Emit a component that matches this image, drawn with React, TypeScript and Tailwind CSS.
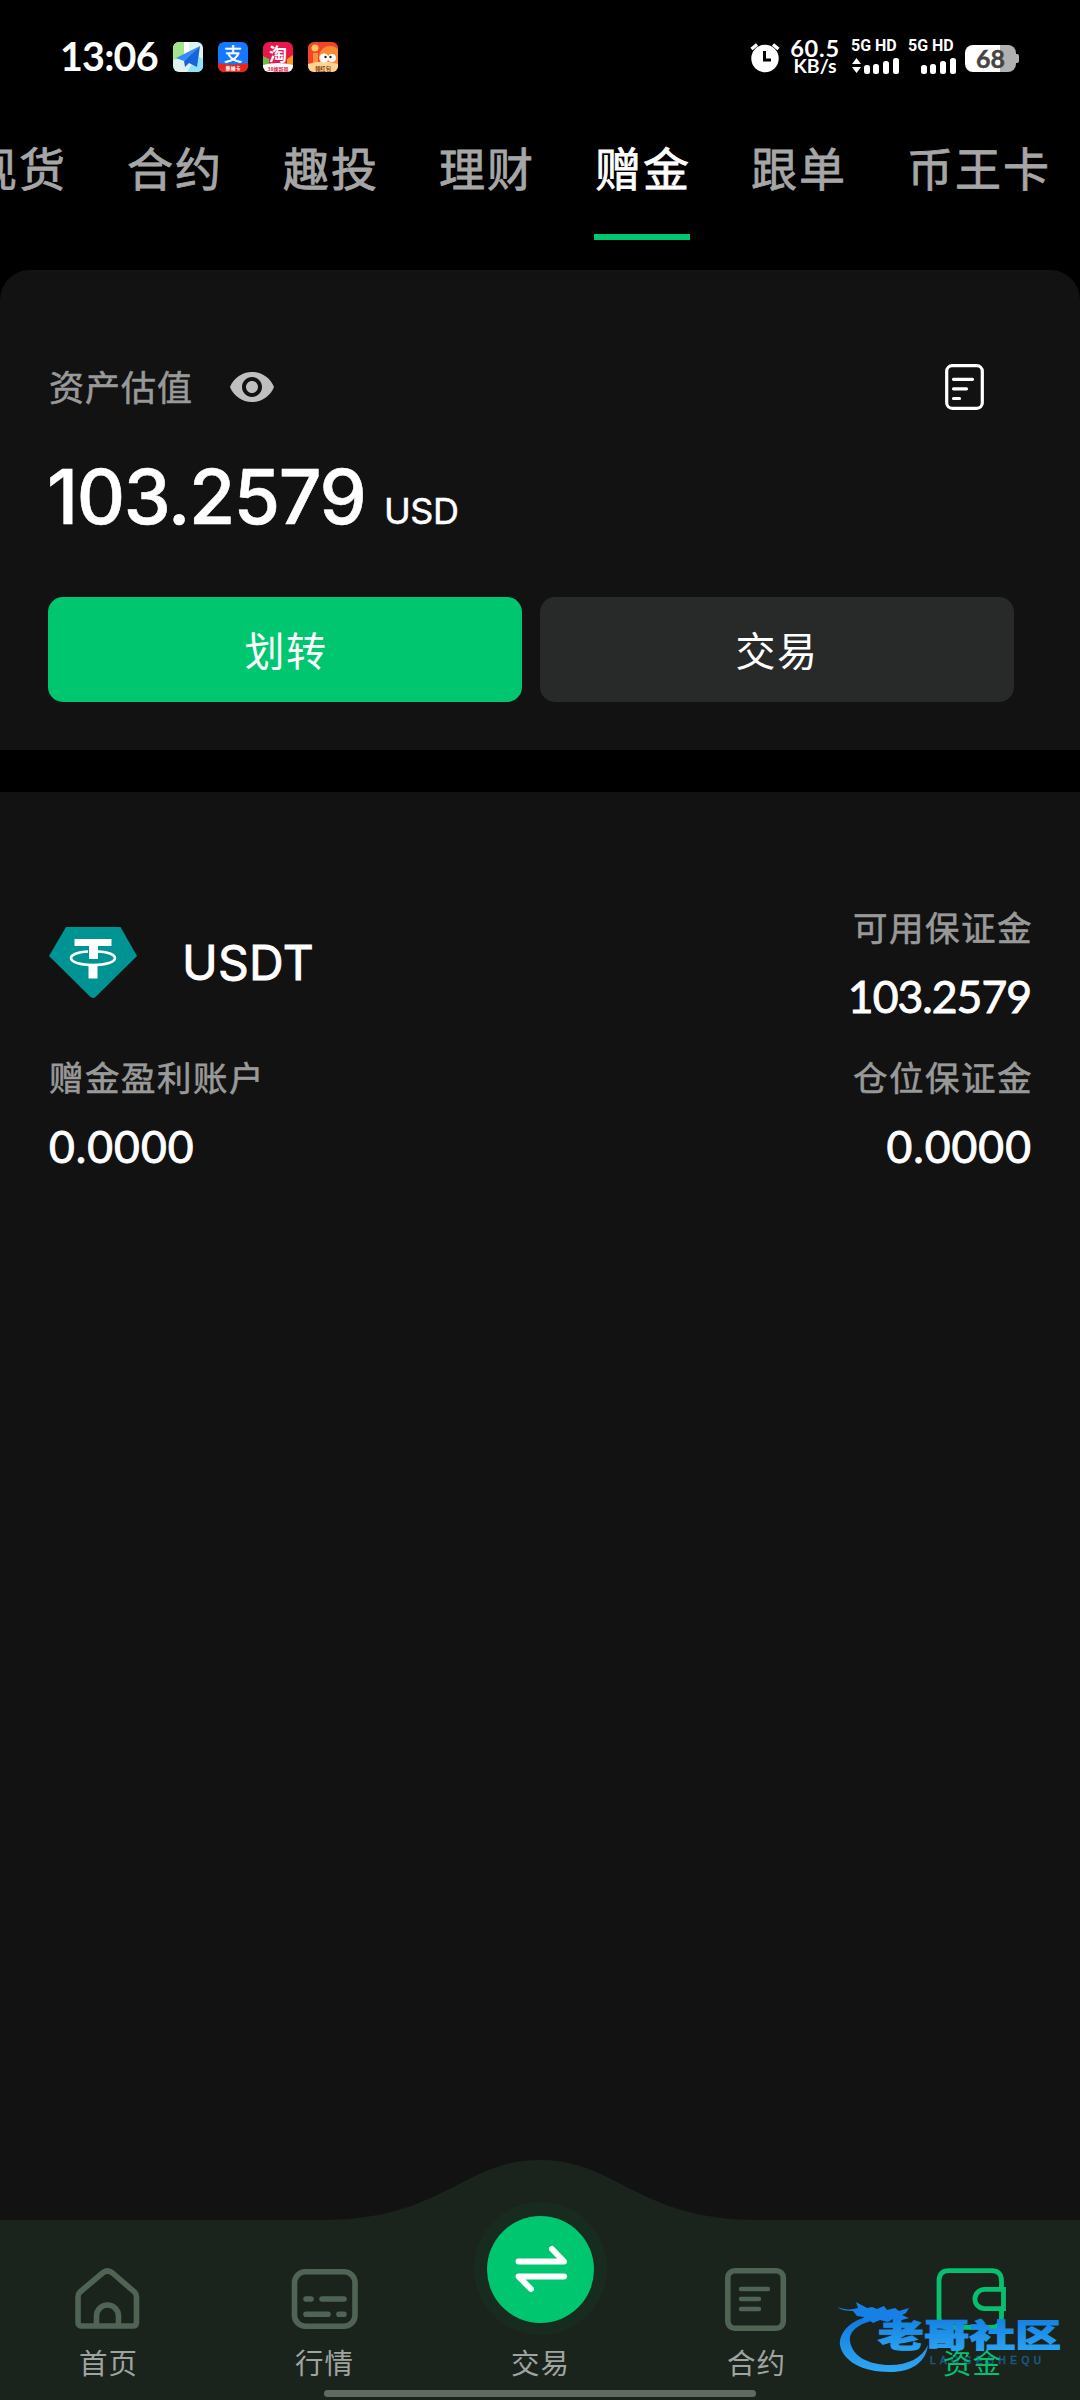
import type { ReactNode } from 'react';
import { MdVisibility } from 'react-icons/md';

const TABS = ['现货', '合约', '趣投', '理财', '赠金', '跟单', '币王卡'];
const ACTIVE_TAB = '赠金';

function AppBadge({ children }: { children: ReactNode }) {
  return (
    <svg className="w-[30px] h-[30px] rounded-[6px]" viewBox="0 0 30 30">
      {children}
    </svg>
  );
}

function Signal({ arrows }: { arrows?: boolean }) {
  return (
    <div className="flex flex-col items-end w-[48px]">
      <div className="w-full text-[16px] leading-[14px] font-bold whitespace-nowrap font-['Roboto','Liberation_Sans',sans-serif]">
        5G HD
      </div>
      <svg className="w-[48px] h-[17px] mt-[4px]" viewBox="0 0 48 17" fill="#fff">
        {arrows && <path d="M1 7 5.5 1 10 7ZM1 10h9l-4.5 6Z" />}
        <rect x="13" y="8" width="6" height="9" rx="2.5" />
        <rect x="22" y="7" width="6" height="10" rx="2.5" />
        <rect x="32" y="4" width="6" height="13" rx="2.5" />
        <rect x="42" y="1" width="6" height="16" rx="2.5" />
      </svg>
    </div>
  );
}

function StatusBar() {
  return (
    <header className="h-[114px] shrink-0 flex items-start justify-between pl-[60px] pr-[60px] text-white">
      <div className="flex items-center h-[30px] mt-[41px]">
        <span className="w-[113px] text-[39.5px] leading-[30px] font-bold tracking-[-0.8px] font-['Lato',sans-serif]">13:06</span>
        <div className="flex gap-[15px] mt-[2px]">
          <AppBadge>
            <rect width="30" height="30" fill="#dff3ee" />
            <path d="M0 0h11v15L0 18Z" fill="#a4e38c" />
            <path d="M11 0h5v12l-5 3Z" fill="#fff" />
            <path d="M14 30 24 14l6 3v13Z" fill="#8fe3ff" />
            <path d="M27 4 3 16l8 3Z" fill="#2f8df5" />
            <path d="M27 4 11 19l1 6 4-4 8 4Z" fill="#1763dc" />
          </AppBadge>
          <AppBadge>
            <rect width="30" height="30" fill="#1677ff" />
            <text x="15" y="19" textAnchor="middle" fontSize="18" fill="#fff" stroke="#fff" strokeWidth="0.5" fontFamily="Noto Sans CJK SC">支</text>
            <path d="M0 21q15 3 30 0v9H0Z" fill="#ee2416" />
            <text x="15" y="28" textAnchor="middle" fontSize="5" fontWeight="700" fill="#fff" fontFamily="Noto Sans CJK SC">集福卡</text>
          </AppBadge>
          <AppBadge>
            <rect width="30" height="30" fill="#e8164b" />
            <path d="M0 14 6 17v7H0Z" fill="#6bbf3c" />
            <path d="M30 13l-6 4v7h6Z" fill="#f79a1e" />
            <path d="M0 23q15-4 30 0v7H0Z" fill="#fff" />
            <text x="15" y="19" textAnchor="middle" fontSize="18" fontWeight="700" fill="#fff" fontFamily="Noto Sans CJK SC">淘</text>
            <text x="15" y="28.7" textAnchor="middle" fontSize="5" fontWeight="700" fill="#e8164b" fontFamily="Noto Sans CJK SC">38焕新周</text>
          </AppBadge>
          <AppBadge>
            <rect width="30" height="30" fill="#f2432c" />
            <circle cx="22" cy="15" r="11" fill="#f98b35" />
            <circle cx="7" cy="6" r="3.5" fill="#ffc65b" />
            <path d="M5 11h5v11H5Z" fill="#fb8f3a" />
            <path d="M0 22q15-5 30 0v8H0Z" fill="#ffd391" />
            <circle cx="16" cy="16" r="4.6" fill="#fff" />
            <circle cx="24" cy="16" r="4" fill="#fff" />
            <circle cx="17.5" cy="15" r="1.2" fill="#222" />
            <circle cx="22.5" cy="15" r="1.2" fill="#222" />
            <text x="15" y="28.6" textAnchor="middle" fontSize="5.4" fontWeight="700" fill="#7a3a10" fontFamily="Noto Sans CJK SC">领红包</text>
          </AppBadge>
        </div>
      </div>

      <div className="flex items-start mt-[39px]">
        <svg className="w-[30px] h-[34px]" viewBox="0 0 30 34">
          <circle cx="15" cy="19.5" r="13.7" fill="#fff" />
          <path d="M1.5 10 7 5.5M28.5 10 23 5.5" stroke="#fff" strokeWidth="3.4" />
          <path d="M14.5 12v9H21" stroke="#000" strokeWidth="3" fill="none" />
        </svg>
        <div className="w-[60px] ml-[5px] flex flex-col items-center font-bold font-['Lato',sans-serif]">
          <span className="text-[23.5px] leading-[18px] tracking-[0.8px]">60.5</span>
          <span className="text-[19.5px] leading-[18px]">KB/s</span>
        </div>
        <div className="flex gap-[9px] ml-[6px]">
          <Signal arrows />
          <Signal />
        </div>
        <svg className="w-[55px] h-[34px] ml-[9px]" viewBox="0 0 55 34">
          <clipPath id="cell"><rect y="6" width="51" height="27" rx="8" /></clipPath>
          <g clipPath="url(#cell)">
            <rect width="35" height="34" fill="#fff" />
            <rect x="35" width="20" height="34" fill="#b1b1b1" />
          </g>
          <path d="M51 15h1q2 0 2 2v5q0 2-2 2h-1Z" fill="#b1b1b1" />
          <text x="25.5" y="28.5" textAnchor="middle" fontSize="25" fontWeight="700" fill="#444" stroke="#444" strokeWidth="0.4" fontFamily="Lato">68</text>
        </svg>
      </div>
    </header>
  );
}

function DocIcon() {
  return (
    <svg className="w-[39px] h-[46px]" viewBox="0 0 39 46" fill="none" stroke="#fff" strokeWidth="3.2" strokeLinecap="round">
      <rect x="1.7" y="1.7" width="35.6" height="42.6" rx="5.5" />
      <path d="M8.5 15.3h19M8.5 24.8h13M8.5 34.5h6" />
    </svg>
  );
}

function TetherIcon() {
  return (
    <svg className="w-[88px] h-[72px]" viewBox="0 0 88 72">
      <path d="M17 0h54.5L88 29 46.5 70Q44 72 41.5 70L0 29Z" fill="#009393" />
      <path d="M25.5 12h37v7H49v13h-9v-13H25.5Z" fill="#fff" />
      <path d="M39.5 37h9v14.5h-9Z" fill="#fff" />
      <path d="M39 24.5C28 25 22 28 22 31c0 4 9 7 22 7s22-3 22-7c0-3-6-6-17-6.5" fill="none" stroke="#fff" strokeWidth="2.6" />
    </svg>
  );
}

type StatProps = {
  label: string;
  value: string;
  right?: boolean;
  tight?: boolean;
};

function Stat({ label, value, right, tight }: StatProps) {
  return (
    <div className={right ? 'flex flex-col items-end' : 'flex flex-col items-start'}>
      <div className="text-[34.5px] leading-[36px] tracking-[1.5px] -mt-[2px] text-[#999] [-webkit-text-stroke:0.6px_#999] -mr-[2px]">{label}</div>
      <div
        className={
          tight
            ? "mt-[34px] text-[44.5px] leading-[36px] tracking-[-1px] text-white [-webkit-text-stroke:0.9px_#fff] font-['Lato',sans-serif]"
            : "mt-[34px] text-[44.5px] leading-[36px] tracking-[1px] -mr-px text-white [-webkit-text-stroke:0.9px_#fff] font-['Lato',sans-serif]"
        }
      >
        {value}
      </div>
    </div>
  );
}

type NavItemProps = {
  label: string;
  active?: boolean;
  children: ReactNode;
};

function NavItem({ label, active, children }: NavItemProps) {
  return (
    <div className="flex-1 flex flex-col items-center pt-[44px]">
      <svg
        className={active ? 'w-[72px] h-[72px] text-[#07bf6e]' : 'w-[72px] h-[72px] text-[#506455]'}
        viewBox="0 0 72 72" fill="none" stroke="currentColor" strokeWidth="5.6" strokeLinecap="round"
      >
        {children}
      </svg>
      <span
        className={
          active
            ? 'relative z-20 mt-[10px] text-[28.5px] leading-[32px] tracking-[1px] -mr-px text-[#07bf6e]'
            : 'mt-[10px] text-[28.5px] leading-[32px] tracking-[1px] -mr-px text-[#a0a4a1]'
        }
      >
        {label}
      </span>
    </div>
  );
}

function Watermark() {
  return (
    <svg className="absolute z-10 left-[836px] top-[72px] w-[230px] h-[85px]" viewBox="0 0 230 85">
      <defs>
        <linearGradient id="wm" x1="0" y1="0" x2="0" y2="1">
          <stop offset="0" stopColor="#0f78e0" />
          <stop offset="1" stopColor="#2fa8f2" />
        </linearGradient>
      </defs>
      {/* body and tail */}
      <path d="M30 25C12 30 3 42 4 53 7 69 26 80 54 80c22 0 36-10 38-27-6 13-20 20-38 20C32 73 16 64 14 49 13 39 22 31 44 27Z" fill="url(#wm)" />
      {/* head and whiskers */}
      <path d="M1 15c8 3 14 3 21 1l-2-6 11 6 5-1 5 2 7-3 3 4 8-2 4 3 10-3-3 5-4 2 7 3-7 2-9-1-5 3-8-2-7 3-4-3-7 2 2-5-7-1-4-5C11 19 5 18 1 15Z" fill="#1680e6" />
      <text x="42" y="55" fontSize="32" fontWeight="900" textLength="183" lengthAdjust="spacingAndGlyphs" fill="url(#wm)" stroke="url(#wm)" strokeWidth="1" fontFamily="Noto Sans CJK SC">
        老哥社区
      </text>
      <text x="94" y="71.5" fontSize="10" textLength="111" fill="#1c5a86" stroke="#1c5a86" strokeWidth="0.5" fontFamily="Liberation Sans">
        LAOGESHEQU
      </text>
    </svg>
  );
}

function BottomNav() {
  return (
    <nav className="relative h-[180px] shrink-0 bg-[#1b231d] flex">
      <svg className="absolute left-[320px] -top-[60px] w-[440px] h-[61px]" viewBox="320 0 440 61">
        <path d="M320 61V60C390 60 425 42 467 20 492 7 512 0 540 0s48 7 73 20c42 22 77 40 147 40v1Z" fill="#1b231d" />
      </svg>

      <NavItem label="首页">
        <path d="M6 33Q6 30 8 28L30.500 9q5-4 10 0l22 19q2 2 2 5v25.500q0 3.500-4 3.500H10q-4 0-4-3.500Z" strokeLinejoin="round" />
        <path d="M24.500 62V52a11 11 0 0 1 22 0v10" strokeLinecap="butt" />
      </NavItem>
      <NavItem label="行情">
        <rect x="6.5" y="7.8" width="60.5" height="54.5" rx="11" />
        <path d="M18 35h5M34 35h22M18 50.300h22M51 50.300h5" />
      </NavItem>

      <div className="relative flex-1 flex flex-col items-center">
        <div className="-mt-[18px] w-[133px] h-[133px] rounded-full bg-[#182b1f] flex items-center justify-center">
          <div className="w-[107px] h-[107px] mt-px ml-px rounded-full bg-[#00c76f] flex items-center justify-center">
            <svg className="w-[60px] h-[60px]" viewBox="0 0 60 60" fill="none" stroke="#fff" strokeWidth="6" strokeLinecap="round" strokeLinejoin="round">
              <path d="M7.500 22.500h45.500L41 10M53 37.500H7.500L20 50" />
            </svg>
          </div>
        </div>
        <span className="mt-[11px] text-[28.5px] leading-[32px] tracking-[1px] -mr-px text-[#a0a4a1]">交易</span>
      </div>

      <NavItem label="合约">
        <rect x="7.8" y="6.8" width="55.5" height="57.5" rx="7" />
        <path d="M21 25h27M21 35h18M21 45h18" strokeWidth="4.4" />
      </NavItem>
      <NavItem label="资金" active>
        <path
          d="M65.500 25V16.700q0-10-10-10H13Q3 6.700 3 16.700v36.600q0 10 10 10h42.500q10 0 10-10V45M67.500 25.400H48.500a9.600 9.600 0 0 0 0 19.200H67.500Z"
          strokeWidth="4.8" strokeLinecap="butt"
        />
      </NavItem>

      <Watermark />
      <div className="absolute left-[324px] top-[170px] w-[432px] h-[7px] rounded-full bg-[#616964]" />
    </nav>
  );
}

export default function App() {
  return (
    <div className="w-[1080px] h-[2400px] bg-black flex flex-col overflow-hidden font-['Noto_Sans_CJK_SC',sans-serif]">
      <StatusBar />

      <div className="h-[126px] shrink-0 flex justify-end gap-[60px] pr-[30px] overflow-hidden">
        {TABS.map((tab) => (
          <div
            key={tab}
            className={
              tab === ACTIVE_TAB
                ? 'shrink-0 flex flex-col justify-between text-white [-webkit-text-stroke:0.8px_#fff]'
                : 'shrink-0 flex flex-col justify-between text-[#a6a6a6] [-webkit-text-stroke:0.8px_#a6a6a6]'
            }
          >
            <span className="mt-[27px] pl-px -mr-px text-[46px] leading-[50px] tracking-[2px] whitespace-nowrap">{tab}</span>
            {tab === ACTIVE_TAB && <div className="h-[6px] bg-[#00c76f]" />}
          </div>
        ))}
      </div>

      <section className="mt-[30px] h-[480px] shrink-0 bg-[#121212] rounded-t-[30px] px-[48px] pt-[93px]">
        <div className="flex items-center justify-between h-[48px] pr-[48px]">
          <div className="flex items-center">
            <span className="-mt-[3px] pl-px text-[35px] leading-[48px] tracking-[1px] text-[#999] [-webkit-text-stroke:0.6px_#999]">资产估值</span>
            <MdVisibility className="ml-[35px] w-[48px] h-[48px] text-[#bfbfbf]" />
          </div>
          <DocIcon />
        </div>

        <div className="mt-[48px] h-[76px] flex items-baseline text-white font-['Inter',sans-serif]">
          <span className="w-[319px] text-[75px] leading-[76px] font-medium tracking-[-1.4px] -ml-px [-webkit-text-stroke:0.6px_#fff]">103.2579</span>
          <span className="ml-[18px] text-[36px] tracking-[-0.5px] [-webkit-text-stroke:0.5px_#fff]">USD</span>
        </div>

        <div className="mt-[62px] flex gap-[18px] text-[40px] tracking-[1.5px] text-white">
          <button className="w-[474px] h-[105px] rounded-[15px] bg-[#00c76f] pl-[2px] pb-[2px]">划转</button>
          <button className="w-[474px] h-[105px] rounded-[15px] bg-[#282a29] pb-[2px]">交易</button>
        </div>
      </section>

      <main className="mt-[42px] flex-1 bg-[#121212] px-[49px] pt-[118px]">
        <div className="flex justify-between">
          <div className="flex items-start pt-[17px]">
            <TetherIcon />
            <span className="ml-[45px] mt-[10px] text-[48px] leading-[52px] tracking-[0.3px] text-white [-webkit-text-stroke:0.9px_#fff] font-['Inter',sans-serif]">USDT</span>
          </div>
          <Stat label="可用保证金" value="103.2579" right tight />
        </div>
        <div className="mt-[46px] flex justify-between">
          <Stat label="赠金盈利账户" value="0.0000" />
          <Stat label="仓位保证金" value="0.0000" right />
        </div>
      </main>

      <BottomNav />
    </div>
  );
}
